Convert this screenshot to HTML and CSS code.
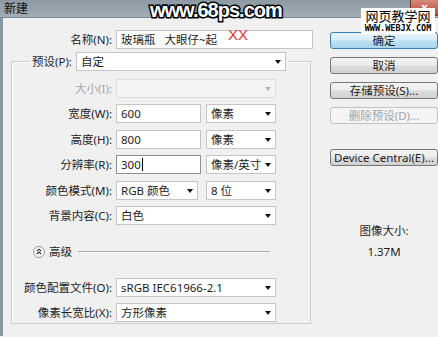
FILE: index.html
```html
<!DOCTYPE html>
<html lang="zh-CN">
<head>
  <meta charset="UTF-8" />
  <title>新建</title>
  <link rel="stylesheet" href="styles.css">
</head>
<body>

  <div class="window">
    <div class="titlebar">
      <span class="title">新建</span>
      <span class="close">x</span>
    </div>

    <div class="dialog">
      <div class="main">
        <div class="row name-row">
          <label class="lbl">名称(N):</label>
          <div class="input name-input">玻璃瓶&nbsp;&nbsp;&nbsp;大眼仔~起</div>
        </div>

        <fieldset class="preset">
          <legend>
            <span class="legend-lbl">预设(P):</span>
            <div class="select legend-select">自定</div>
          </legend>

          <div class="row">
            <label class="lbl off">大小(I):</label>
            <div class="select full disabled"></div>
          </div>
          <div class="row">
            <label class="lbl">宽度(W):</label>
            <div class="input num">600</div>
            <div class="select unit">像素</div>
          </div>
          <div class="row">
            <label class="lbl">高度(H):</label>
            <div class="input num">800</div>
            <div class="select unit">像素</div>
          </div>
          <div class="row">
            <label class="lbl">分辨率(R):</label>
            <div class="input num focus">300<span class="caret"></span></div>
            <div class="select unit">像素/英寸</div>
          </div>
          <div class="row">
            <label class="lbl">颜色模式(M):</label>
            <div class="select mode">RGB 颜色</div>
            <div class="select unit">8 位</div>
          </div>
          <div class="row">
            <label class="lbl">背景内容(C):</label>
            <div class="select full">白色</div>
          </div>

          <div class="advanced">
            <span class="toggle">
              <svg width="12" height="12" viewBox="0 0 12 12">
                <circle cx="6" cy="6" r="5.5" fill="#f6f6f6" stroke="#9a9a9a"/>
                <path d="M3.8 5.2 L6 3.2 L8.2 5.2 M3.8 8 L6 6 L8.2 8" fill="none" stroke="#333" stroke-width="1.1"/>
              </svg>
            </span>
            <span class="adv-text">高级</span>
            <span class="adv-line"></span>
          </div>

          <div class="row first-adv">
            <label class="lbl">颜色配置文件(O):</label>
            <div class="select full">sRGB IEC61966-2.1</div>
          </div>
          <div class="row">
            <label class="lbl">像素长宽比(X):</label>
            <div class="select full">方形像素</div>
          </div>
        </fieldset>
      </div>

      <div class="side">
        <button class="btn default">确定</button>
        <button class="btn">取消</button>
        <button class="btn">存储预设(S)...</button>
        <button class="btn disabled">删除预设(D)...</button>
        <button class="btn device">Device Central(E)...</button>
        <div class="size-info">
          <div>图像大小:</div>
          <div class="size-val">1.37M</div>
        </div>
      </div>
    </div>

    <!-- watermarks over the screenshot -->
    <div class="wm-site">www.68ps.com</div>
    <div class="wm-red">XX</div>
    <div class="wm-webjx">
      <div class="wm-cn">网页教学网</div>
      <div class="wm-url">WWW.WEBJX.COM</div>
    </div>
  </div>

</body>
</html>
```

FILE: styles.css
```css
* {
  box-sizing: border-box;
}

body {
  margin: 0;
  padding: 0;
  background: #f0f0f0;
  font-family: "Noto Sans", "Noto Sans CJK SC", sans-serif;
  font-size: 11.5px;
  color: #1e1e1e;
}

.window {
  position: relative;
  width: 438px;
  height: 337px;
  overflow: hidden;
  background: #f0f0f0;
}

/* Title bar */
.titlebar {
  display: flex;
  align-items: flex-start;
  height: 18px;
  background: linear-gradient(#8d99a3, #a2adb6);
  border-bottom: 1px solid #7c8892;
}

.titlebar .title {
  padding: 2px 0 0 4px;
  font-size: 12px;
  line-height: 14px;
  color: #111;
}

.titlebar .close {
  margin-left: auto;
  width: 28px;
  height: 16px;
  background: linear-gradient(#d58a7c, #b84a37);
  border-left: 1px solid #6d3a30;
  border-bottom: 1px solid #6d3a30;
  border-bottom-left-radius: 3px;
  color: #fff;
  font-weight: bold;
  font-size: 11px;
  line-height: 13px;
  text-align: center;
}

/* Dialog body */
.dialog {
  display: flex;
  height: 318px;
  border-left: 3px solid #8a96a0;
}

.main {
  width: 315px;
  padding: 12px 0 0 8px;
}

.row {
  display: flex;
  align-items: center;
  gap: 5px;
  height: 19px;
  margin-top: 6.4px;
}

.row .lbl {
  width: 100px;
  margin-right: -1px;
  text-align: right;
  white-space: nowrap;
  line-height: 19px;
}

.row .lbl.off {
  color: #a8a8a8;
}

.name-row {
  margin-top: 0;
  margin-left: -8px;
}

.name-row .lbl {
  width: 109px;
}

.input,
.select {
  position: relative;
  height: 19px;
  line-height: 17px;
  padding: 0 4px;
  background: #fff;
  border: 1px solid #c5c5c5;
  white-space: nowrap;
}

.input.focus {
  border-color: #8f8f8f;
}

.caret {
  display: inline-block;
  width: 1px;
  height: 13px;
  margin-left: 1px;
  vertical-align: -2px;
  background: #000;
}

.name-input {
  width: 197px;
}

.select::after {
  content: "";
  position: absolute;
  right: 4px;
  top: 7px;
  border-left: 3px solid transparent;
  border-right: 3px solid transparent;
  border-top: 4px solid #111;
}

.select.disabled {
  background: #f4f4f4;
  border-color: #dcdcdc;
}

.select.disabled::after {
  border-top-color: #b4b4b4;
}

.full {
  width: 160px;
}

.num {
  width: 85px;
}

.unit {
  width: 70px;
}

.mode {
  width: 82px;
  margin-right: 3px;
}

/* Preset group */
.preset {
  width: 300px;
  height: 272px;
  margin: 3px 0 0 0;
  padding: 0;
  border: 1px solid #cdcdcd;
  box-shadow: inset 1px 1px 0 #fff;
}

.preset legend {
  display: flex;
  align-items: center;
  gap: 4px;
  margin-left: 18px;
  padding: 0 2px;
}

.legend-lbl {
  line-height: 19px;
}

.legend-select {
  width: 210px;
}

.preset > .row:first-of-type {
  margin-top: 8px;
}

.advanced {
  display: flex;
  align-items: center;
  height: 16px;
  margin: 19px 0 0 21px;
}

.toggle {
  display: flex;
  width: 12px;
  height: 12px;
}

.adv-text {
  margin-left: 4px;
  line-height: 16px;
}

.adv-line {
  width: 192px;
  margin-left: 6px;
  border-top: 1px solid #a9a9a9;
  border-bottom: 1px solid #fff;
}

.row.first-adv {
  margin-top: 18px;
}

/* Right side buttons */
.side {
  display: flex;
  flex-direction: column;
  width: 108px;
  margin-left: 12px;
  padding-top: 14px;
}

.btn {
  height: 17px;
  margin: 0 0 8px 0;
  padding: 0;
  font: inherit;
  line-height: 15px;
  color: #1e1e1e;
  background: linear-gradient(#f4f4f4 0%, #ececec 48%, #dcdcdc 52%, #d2d2d2 100%);
  border: 1px solid #777;
  border-radius: 3px;
}

.btn.default {
  background: linear-gradient(#e6f4fb 0%, #d6ecf8 48%, #bde0f3 52%, #a9d4ec 100%);
  border-color: #3c7fb1;
}

.btn.disabled {
  color: #a3a3a3;
  background: #f4f4f4;
  border-color: #c2c2c2;
  margin-bottom: 25px;
}

.size-info {
  margin-top: 49px;
  text-align: center;
  line-height: 16px;
}

.size-val {
  margin-top: 5px;
}

/* Watermarks */
.wm-site {
  position: absolute;
  left: 150px;
  top: 0;
  font-family: "Liberation Sans", sans-serif;
  font-weight: bold;
  font-size: 20px;
  line-height: 20px;
  letter-spacing: -1px;
  color: #fff;
  -webkit-text-stroke: 3px #000;
  paint-order: stroke fill;
}

.wm-red {
  position: absolute;
  left: 228px;
  top: 26px;
  font-family: "Liberation Sans", sans-serif;
  font-size: 15px;
  color: #e8332f;
}

.wm-webjx {
  position: absolute;
  left: 361px;
  top: 8px;
  width: 74px;
  background: #fff;
  text-align: center;
}

.wm-cn {
  font-family: "Noto Sans CJK SC", sans-serif;
  font-size: 13px;
  line-height: 16px;
  color: #000;
}

.wm-url {
  font-family: "DejaVu Sans Mono", monospace;
  font-weight: bold;
  font-size: 8.5px;
  line-height: 9px;
  padding-bottom: 1px;
  color: #000;
}
```
